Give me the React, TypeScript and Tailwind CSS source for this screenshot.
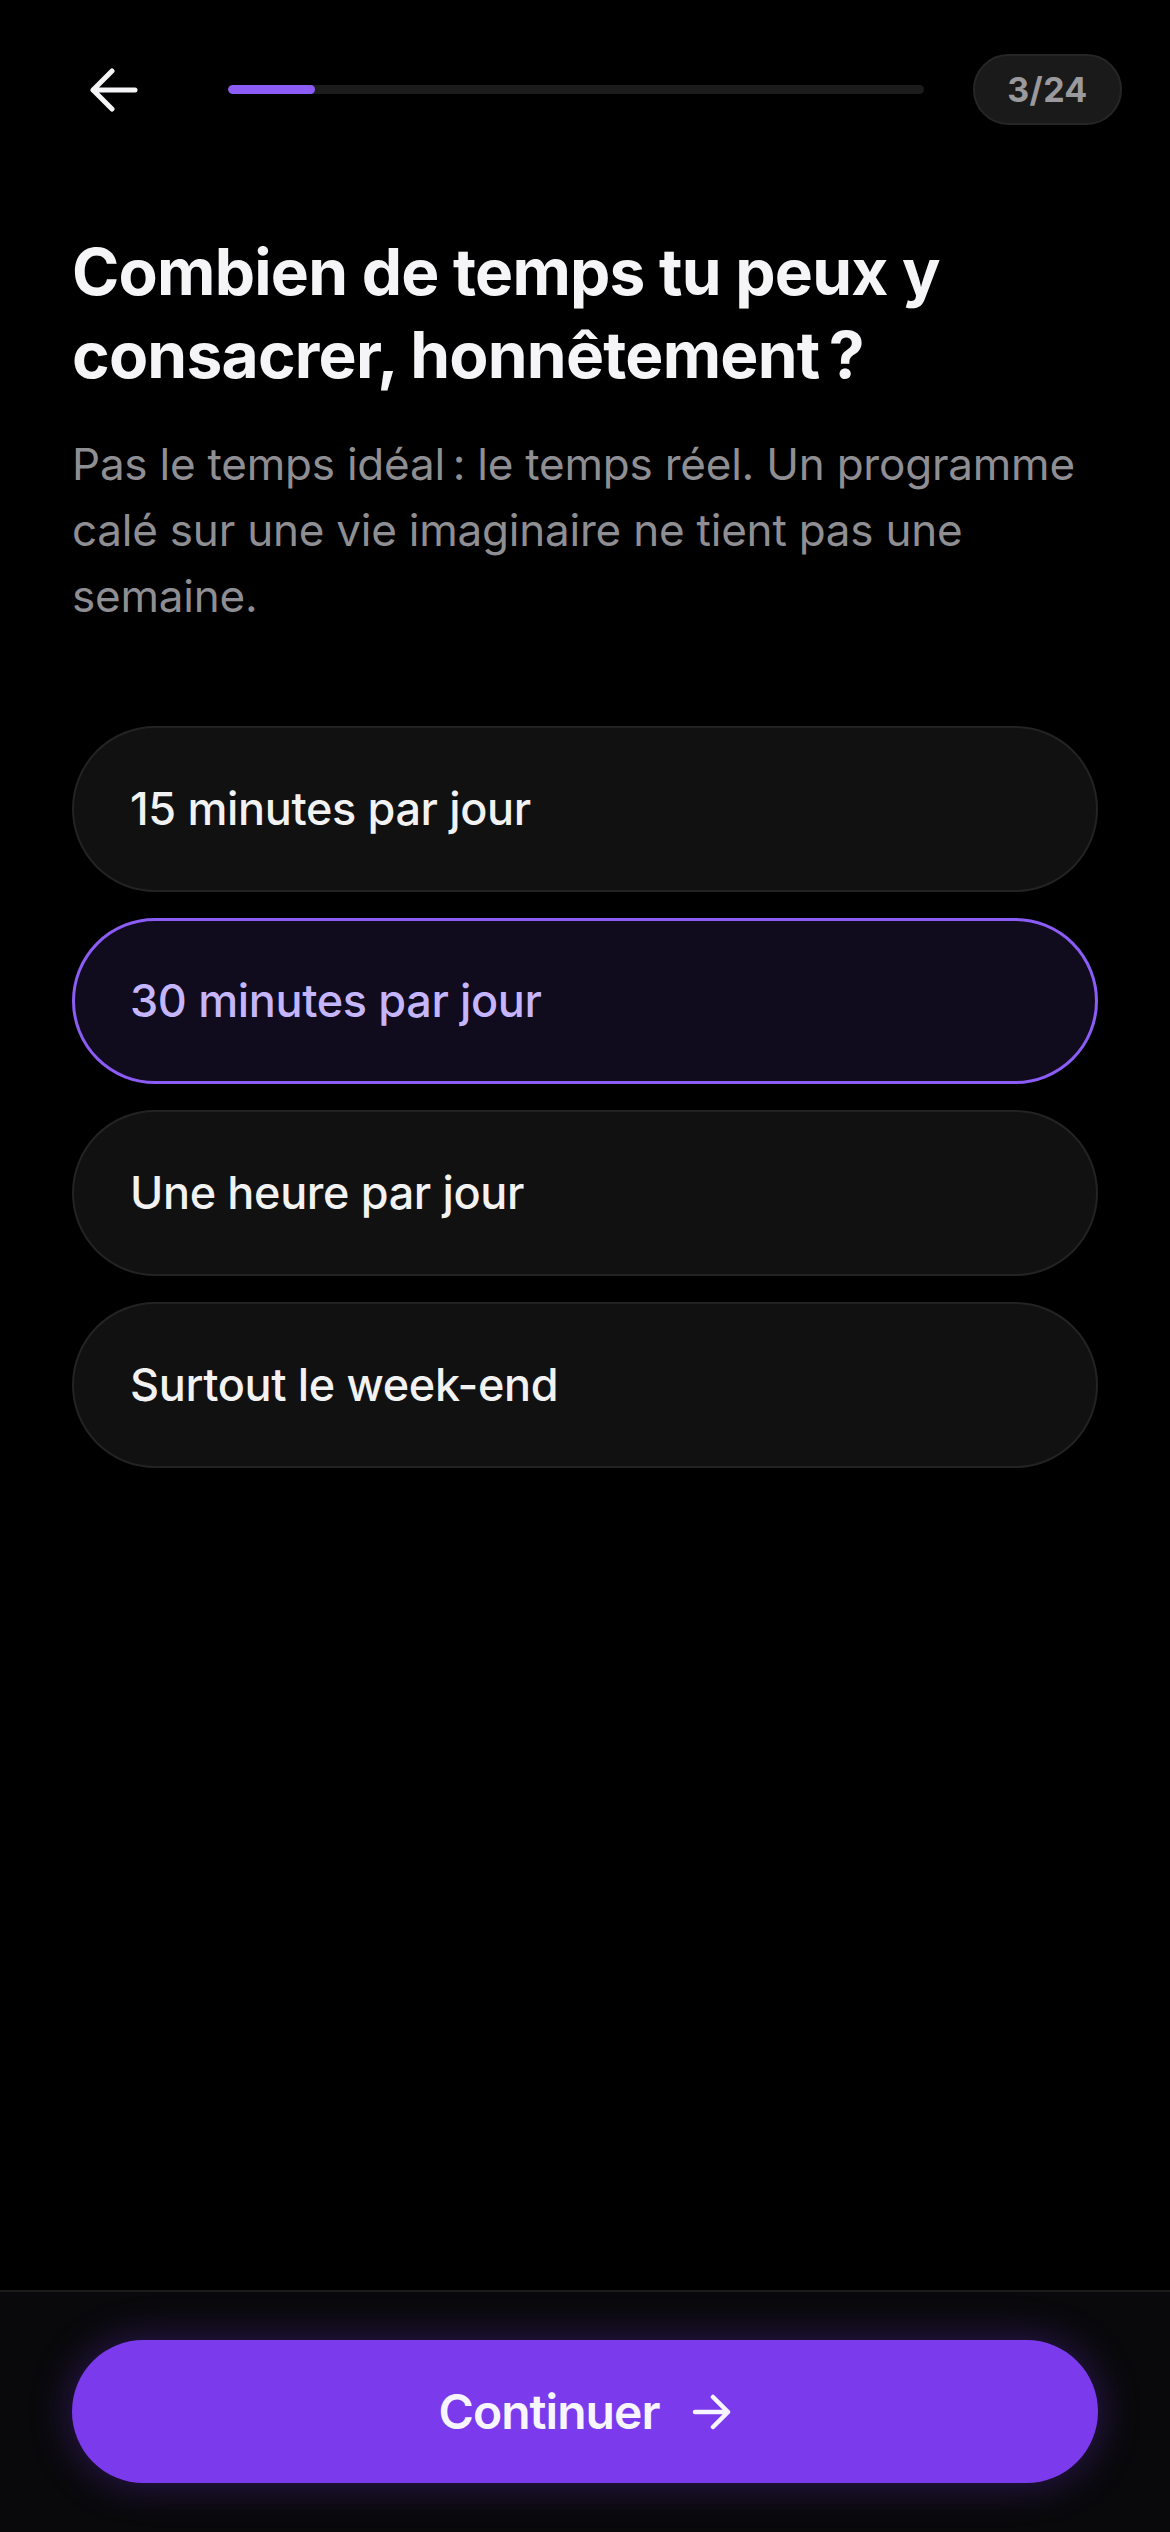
import { useState } from 'react'

const OPTIONS = [
  '15 minutes par jour',
  '30 minutes par jour',
  'Une heure par jour',
  'Surtout le week-end',
]

// ==================== App ====================

export default function App() {
  const [selected, setSelected] = useState(1)

  return (
    <div
      className="min-h-[2532px] w-full bg-black flex flex-col text-[#f5f5f7]"
      style={{ fontFamily: 'Inter, "Noto Sans", sans-serif' }}
    >
      <main className="flex-1 flex flex-col">
        <Header step={3} total={24} />

        <section className="px-[72px] mt-[105px]">
          <h1 className="text-[64px] leading-[83px] font-bold tracking-[-0.012em]">
            Combien de temps tu peux y consacrer, honnêtement&#8239;?
          </h1>
          <p className="mt-[35px] text-[44px] leading-[66px] text-[#8e8e93] tracking-[-0.005em]">
            Pas le temps idéal&#8239;: le temps réel. Un programme calé sur une vie imaginaire ne tient pas une semaine.
          </p>
        </section>

        <ul className="px-[72px] mt-[97px] flex flex-col gap-[26px]">
          {OPTIONS.map((label, i) => (
            <li key={label}>
              <button
                type="button"
                onClick={() => setSelected(i)}
                className={
                  i === selected
                    ? 'w-full h-[166px] rounded-full border-[3px] border-[#8b5cf6] bg-[#100c1e] pl-[55px] text-left text-[45px] font-medium tracking-[-0.008em] text-[#c4b5fd]'
                    : 'w-full h-[166px] rounded-full border-2 border-[#232323] bg-[#111111] pl-[56px] text-left text-[45px] font-medium tracking-[-0.008em] text-[#f2f2f2]'
                }
              >
                {label}
              </button>
            </li>
          ))}
        </ul>
      </main>

      <footer className="border-t-2 border-[#1c1c1c] bg-[#09090b] px-[72px] pt-[48px] pb-[49px]">
        <button
          type="button"
          className="w-full h-[143px] rounded-full bg-[#7c3aed] shadow-[0_0_40px_rgba(124,58,237,0.35)] flex items-center justify-center gap-[32px] text-[48px] font-semibold tracking-[-0.02em] text-[#f7f5ff]"
        >
          Continuer
          <svg width="40" height="36" viewBox="0 0 40 36" fill="none" stroke="currentColor" strokeWidth="4.5" strokeLinecap="round" strokeLinejoin="round">
            <path d="M3 18 H36 M21 3 L36 18 L21 33" />
          </svg>
        </button>
      </footer>
    </div>
  )
}

// ==================== Header ====================

function Header({ step, total }: { step: number; total: number }) {
  const pct = (87 / 696) * 100

  return (
    <header className="flex items-center pt-[54px] pl-[72px] pr-[48px]">
      <button type="button" aria-label="Retour" className="w-[84px] h-[71px] flex items-center justify-center text-[#f5f5f7]">
        <svg width="48" height="48" viewBox="0 0 48 48" fill="none" stroke="currentColor" strokeWidth="5" strokeLinecap="round" strokeLinejoin="round">
          <path d="M22 5 L3 24 L22 43 M3 24 H45" />
        </svg>
      </button>
      <div className="flex-1 ml-[72px] mr-[49px] h-[9px] rounded-full bg-[#1c1c1c] overflow-hidden">
        <div className="h-full rounded-full bg-[#8b5cf6]" style={{ width: `${pct}%` }} />
      </div>
      <div className="w-[149px] h-[71px] rounded-full border-2 border-[#262626] bg-[#1a1a1a] flex items-center justify-center text-[34px] font-bold tracking-[0.01em] text-[#9a9a9e]">
        {step}/{total}
      </div>
    </header>
  )
}
